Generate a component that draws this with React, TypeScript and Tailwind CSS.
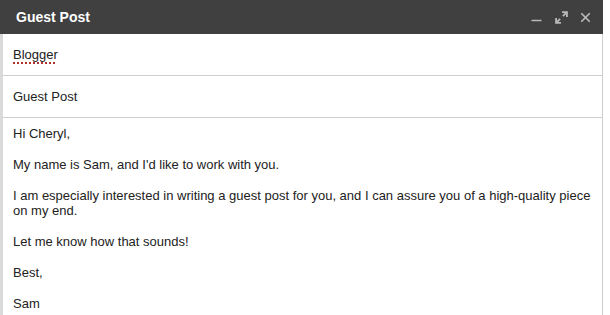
import { Minus, X } from "lucide-react";

function ExpandIcon() {
  return (
    <svg width="13" height="13" viewBox="0 0 12 12" fill="none" stroke="currentColor" strokeWidth="1.7">
      <path d="M6.5 1h4.5v4.5" />
      <path d="M11 1L7.3 4.7" />
      <path d="M5.5 11H1V6.5" />
      <path d="M1 11l3.7-3.7" />
    </svg>
  );
}

const paragraphs = [
  "Hi Cheryl,",
  "My name is Sam, and I'd like to work with you.",
  "I am especially interested in writing a guest post for you, and I can assure you of a high-quality piece on my end.",
  "Let me know how that sounds!",
  "Best,",
  "Sam",
];

export default function App() {
  return (
    <div
      className="w-[610px] h-[315px] overflow-hidden bg-white text-[13px] text-[#222]"
      style={{ fontFamily: '"Liberation Sans", Arial, sans-serif' }}
    >
      <div className="w-[603px] h-full flex flex-col">
        {/* Header */}
        <div className="h-[34px] shrink-0 bg-[#404040] flex items-center justify-between pl-4 pr-[10px]">
          <span className="text-white font-bold text-[14px]">Guest Post</span>
          <div className="flex items-center gap-[10px] text-[#b8b8b8]">
            <Minus size={15} strokeWidth={2.6} className="mt-[6px] mr-px" />
            <ExpandIcon />
            <X size={15} strokeWidth={2.8} />
          </div>
        </div>

        <div className="flex-1 flex flex-col border-l-[3px] border-l-[#d9d9d9] border-r border-r-[#cfcfcf]">
          {/* Recipient */}
          <div className="h-[42px] shrink-0 flex items-center px-[10px] border-b border-[#cfcfcf]">
            <span className="underline decoration-dotted decoration-[#b03030] decoration-2 underline-offset-[4px]">
              Blogger
            </span>
          </div>

          {/* Subject */}
          <div className="h-[42px] shrink-0 flex items-center px-[10px] border-b border-[#cfcfcf]">
            <span>Guest Post</span>
          </div>

          {/* Body */}
          <div className="flex-1 px-[10px] pt-[8px] flex flex-col gap-[16px] leading-[15px]">
            {paragraphs.map((p) => (
              <p key={p}>{p}</p>
            ))}
          </div>
        </div>
      </div>
    </div>
  );
}
